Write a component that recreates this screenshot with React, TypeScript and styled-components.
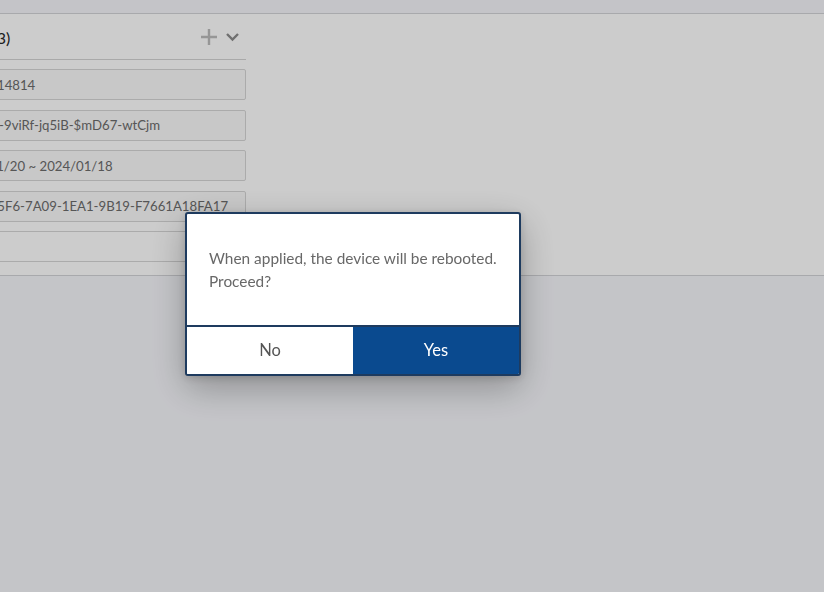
import React from "react";
import styled, { createGlobalStyle } from "styled-components";

const GlobalStyle = createGlobalStyle`
  html, body { margin: 0; padding: 0; }
  body {
    font-family: Lato, "Noto Sans", "Noto Sans CJK KR", sans-serif;
    background: #f6f7fb;
    overflow: hidden;
  }
`;

const Page = styled.div`
  width: 824px;
  height: 592px;
  display: flex;
  flex-direction: column;
  overflow: hidden;
  background: #f6f7fb;
`;

const TopBar = styled.div`
  height: 13px;
  flex: none;
  background: #f5f6fa;
  border-bottom: 1px solid #d3d4d8;
`;

const Main = styled.div`
  height: 261px;
  flex: none;
  background: #ffffff;
  border-bottom: 1px solid #d3d4d8;
  display: flex;
  overflow: hidden;
`;

const Sidebar = styled.section`
  margin-left: -82px;
  width: 328px;
  flex: none;
  display: flex;
  flex-direction: column;
`;

const Header = styled.div`
  height: 46px;
  display: flex;
  align-items: center;
  justify-content: space-between;
  border-bottom: 1px solid #d4d4d4;
  padding: 1px 6px 0 18px;
  box-sizing: border-box;
`;

const Title = styled.span`
  font-size: 16px;
  color: #262626;
`;

const Tools = styled.div`
  display: flex;
  align-items: center;
  gap: 7px;
`;

const Fields = styled.div`
  display: flex;
  flex-direction: column;
  gap: 9.5px;
  padding-top: 9px;
`;

const Field = styled.div<{ $empty?: boolean }>`
  height: 31px;
  box-sizing: border-box;
  border: 1px solid #d6d6d6;
  border-radius: 2px;
  background: ${(p) => (p.$empty ? "#ffffff" : "#fafafa")};
  padding: 0 12px 0 33px;
  display: flex;
  align-items: center;
  font-size: 13.2px;
  color: #6c6c6c;
  white-space: nowrap;
  overflow: hidden;
`;

const Overlay = styled.div`
  position: fixed;
  inset: 0;
  background: rgba(0, 0, 0, 0.2);
  padding: 212px 0 0 185px;
  box-sizing: border-box;
`;

const Dialog = styled.div`
  width: 336px;
  box-sizing: border-box;
  background: #ffffff;
  border: 2px solid #1e3b5f;
  border-radius: 3px;
  overflow: hidden;
  box-shadow: 0 12px 36px rgba(0, 0, 0, 0.28), 0 2px 8px rgba(0, 0, 0, 0.15);
  display: flex;
  flex-direction: column;
`;

const Message = styled.p`
  margin: 0;
  padding: 33px 16px 32px 22px;
  font-size: 15.4px;
  line-height: 23px;
  color: #686868;
  border-bottom: 2px solid #1e3b5f;
`;

const Buttons = styled.div`
  display: grid;
  grid-template-columns: 1fr 1fr;
  height: 47px;
`;

const DialogButton = styled.button<{ $primary?: boolean }>`
  border: none;
  margin: 0;
  padding: 0 0 2px;
  font-family: inherit;
  font-size: 16.5px;
  cursor: pointer;
  background: ${(p) => (p.$primary ? "#0a4a8f" : "#ffffff")};
  color: ${(p) => (p.$primary ? "#ffffff" : "#555555")};
`;

const PlusIcon = () => (
  <svg width="18" height="18" viewBox="0 0 18 18">
    <path d="M9 1v16M1 9h16" stroke="#bcbcbc" strokeWidth="2.4" fill="none" />
  </svg>
);

const ChevronIcon = () => (
  <svg width="15" height="10" viewBox="0 0 15 10">
    <path d="M2 2l5.5 5.5L13 2" stroke="#8c8c8c" strokeWidth="2.4" fill="none" />
  </svg>
);

export default function App() {
  return (
    <>
      <GlobalStyle />
      <Page>
        <TopBar />
        <Main>
          <Sidebar>
            <Header>
              <Title>License (3)</Title>
              <Tools>
                <PlusIcon />
                <ChevronIcon />
              </Tools>
            </Header>
            <Fields>
              <Field>L2023014814</Field>
              <Field>HW7Kq-9viRf-jq5iB-$mD67-wtCjm</Field>
              <Field>2023/01/20 ~ 2024/01/18</Field>
              <Field>DDE4D5F6-7A09-1EA1-9B19-F7661A18FA17</Field>
              <Field $empty />
            </Fields>
          </Sidebar>
        </Main>
      </Page>
      <Overlay>
        <Dialog role="dialog">
          <Message>
            When applied, the device will be rebooted.
            <br />
            Proceed?
          </Message>
          <Buttons>
            <DialogButton>No</DialogButton>
            <DialogButton $primary>Yes</DialogButton>
          </Buttons>
        </Dialog>
      </Overlay>
    </>
  );
}
